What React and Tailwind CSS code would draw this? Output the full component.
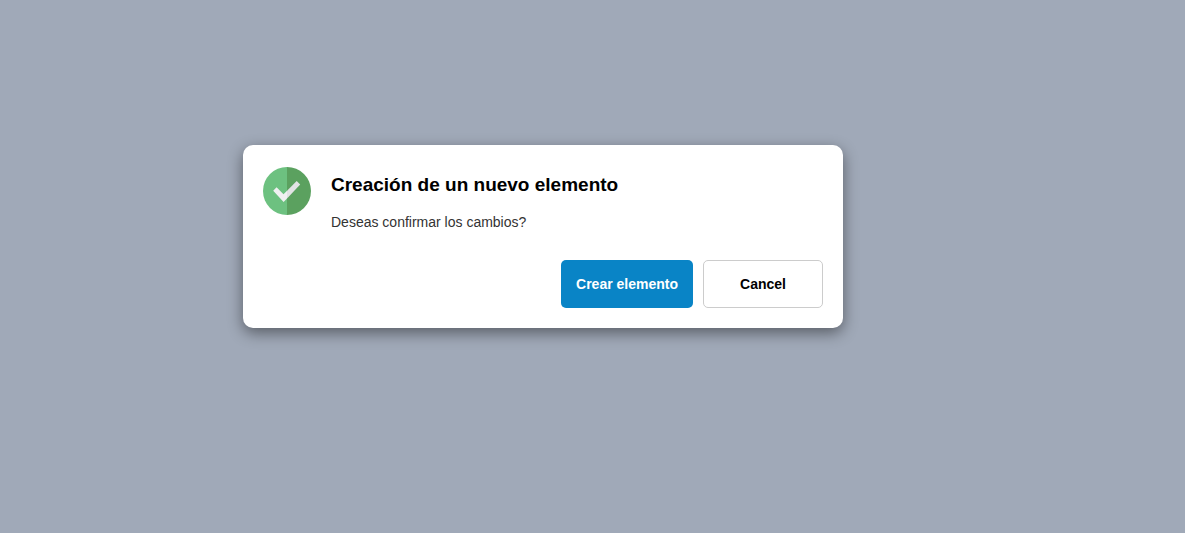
function SuccessIcon() {
  return (
    <svg className="size-12 shrink-0" viewBox="0 0 48 48" aria-hidden="true">
      <path d="M24 0a24 24 0 0 0 0 48z" fill="#6dc180" />
      <path d="M24 0a24 24 0 0 1 0 48z" fill="#5ba15f" />
      <path d="M10.2 23.7 13.6 20.2 20.5 27.3 24 23.8V31.4L20.6 34.9z" fill="#f0f0f1" />
      <path d="M24 23.8 33.7 13.9 37.2 17.4 24 31.4z" fill="#e2e3e4" />
    </svg>
  );
}

export default function App() {
  return (
    <main className="flex min-h-screen items-start justify-center bg-[#a0a9b8] pt-[145px] pr-[99px] font-['Liberation_Sans',Arial,sans-serif] text-black">
      <section
        role="dialog"
        aria-labelledby="dialog-title"
        aria-describedby="dialog-text"
        className="w-full max-w-[600px] rounded-[10px] bg-white p-5 shadow-[0_5px_15px_rgba(0,0,0,0.45)]"
      >
        <div className="flex gap-5 pt-0.5">
          <SuccessIcon />
          <div className="pt-1">
            <h1 id="dialog-title" className="text-[19px] leading-7 font-bold">
              Creación de un nuevo elemento
            </h1>
            <p id="dialog-text" className="mt-3 text-sm leading-[22px] text-[#333]">
              Deseas confirmar los cambios?
            </p>
          </div>
        </div>
        <div className="mt-[27px] flex justify-end gap-2.5">
          <button
            type="button"
            className="h-12 w-[132px] rounded-[5px] bg-[#0984c6] text-sm font-bold text-white"
          >
            Crear elemento
          </button>
          <button
            type="button"
            className="h-12 w-[120px] rounded-[5px] border border-[#ccc] bg-white text-sm font-bold"
          >
            Cancel
          </button>
        </div>
      </section>
    </main>
  );
}
